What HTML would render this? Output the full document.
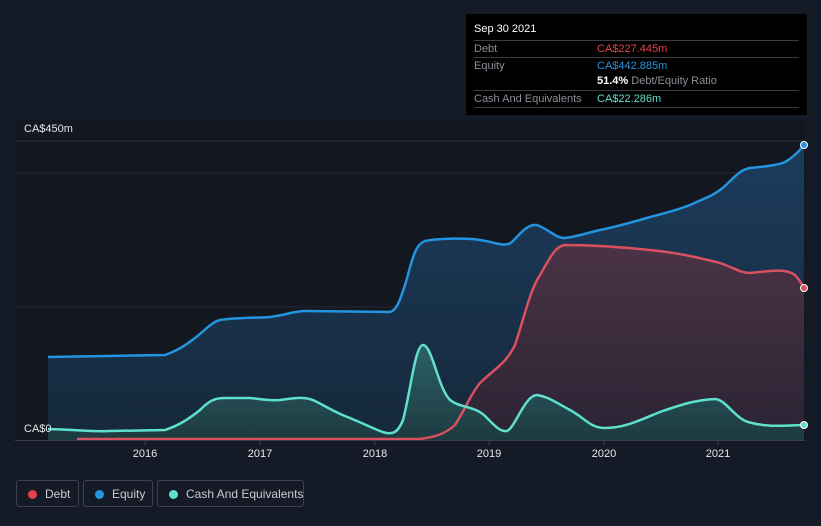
<!DOCTYPE html><html><head><style>
html,body{margin:0;background:#151b26;width:821px;height:526px;overflow:hidden;font-family:"Liberation Sans",sans-serif;position:relative}
.tt{position:absolute;left:466px;top:14px;width:341px;height:101px;background:#000;font-size:11px;color:#8a8f98}
.tt .r{position:absolute;left:8px;right:8px;border-top:1px solid #3a3d44;height:17px;line-height:17px}
.leg{position:absolute;top:480px;height:27px;border:1px solid #3c414b;border-radius:3px;color:#c8ccd2;font-size:12px;line-height:26px;box-sizing:border-box;white-space:nowrap}
.leg i{position:absolute;left:11px;top:9px;width:9px;height:9px;border-radius:50%}
</style></head><body>
<svg width="821" height="526" style="position:absolute;left:0;top:0">
<defs>
<linearGradient id="ge" x1="0" y1="0" x2="0" y2="1"><stop offset="0" stop-color="#1b3c5c"/><stop offset="1" stop-color="#16283b"/></linearGradient>
<linearGradient id="gd" x1="0" y1="0" x2="0" y2="1"><stop offset="0" stop-color="#4a3346"/><stop offset="1" stop-color="#2a2333"/></linearGradient>
<linearGradient id="gc" x1="0" y1="0" x2="0" y2="1"><stop offset="0" stop-color="#2c6166"/><stop offset="1" stop-color="#1d3a40"/></linearGradient>
</defs>
<rect x="15" y="120" width="790" height="320" fill="#121720"/>
<line x1="15" y1="141" x2="805" y2="141" stroke="#2e333c"/>
<line x1="15" y1="173" x2="805" y2="173" stroke="#252a33"/>
<line x1="15" y1="307" x2="805" y2="307" stroke="#252a33"/>
<path d="M48,357 L165,355 C180,350 190,342 195,338 C205,330 212,322 220,320 C240,317 260,318 270,317 C285,315 295,311 305,311 L390,312 C397,310 400,300 405,285 C412,262 414,245 425,241 C440,238 470,238 480,240 C495,242 505,248 512,242 C520,234 527,224 537,225 C550,230 555,238 565,238 C580,236 590,232 600,230 C620,226 640,220 650,217 C670,212 680,209 690,205 C705,198 712,196 720,190 C733,180 738,170 750,168 C770,166 778,165 785,162 C795,156 800,150 804,145 L804,440 L48,440Z" fill="url(#ge)"/>
<path d="M48,357 L165,355 C180,350 190,342 195,338 C205,330 212,322 220,320 C240,317 260,318 270,317 C285,315 295,311 305,311 L390,312 C397,310 400,300 405,285 C412,262 414,245 425,241 C440,238 470,238 480,240 C495,242 505,248 512,242 C520,234 527,224 537,225 C550,230 555,238 565,238 C580,236 590,232 600,230 C620,226 640,220 650,217 C670,212 680,209 690,205 C705,198 712,196 720,190 C733,180 738,170 750,168 C770,166 778,165 785,162 C795,156 800,150 804,145" fill="none" stroke="#2394df" stroke-width="2.5"/>
<path d="M77,439 L420,439 C435,437 445,434 455,425 C465,410 470,395 480,383 C495,368 505,365 515,345 C525,315 530,290 540,275 C550,258 555,246 565,245 C590,245 620,247 650,250 C680,253 700,258 720,263 C735,268 740,273 750,273 C770,271 785,268 795,275 C800,280 802,285 804,288 L804,440 L77,440Z" fill="url(#gd)"/>
<path d="M48,429 C80,430 95,432 110,431 L165,430 C180,425 190,418 200,410 C210,400 215,398 225,398 L250,398 C262,399 268,401 280,400 C295,398 305,396 315,401 C325,406 335,412 345,416 C360,422 370,427 380,431 C392,436 398,433 403,420 C410,395 415,345 423,345 C432,345 438,388 450,400 C460,408 475,406 485,416 C495,426 500,432 507,431 C515,428 525,395 537,395 C550,397 560,405 570,410 C585,418 590,428 605,428 C625,428 640,420 660,412 C680,405 695,400 715,399 C725,399 735,418 748,422 C765,427 780,426 804,425 L804,440 L48,440Z" fill="url(#gc)"/>
<path d="M77,439 L420,439 C435,437 445,434 455,425 C465,410 470,395 480,383 C495,368 505,365 515,345 C525,315 530,290 540,275 C550,258 555,246 565,245 C590,245 620,247 650,250 C680,253 700,258 720,263 C735,268 740,273 750,273 C770,271 785,268 795,275 C800,280 802,285 804,288" fill="none" stroke="#d9505f" stroke-width="2.5"/>
<path d="M48,429 C80,430 95,432 110,431 L165,430 C180,425 190,418 200,410 C210,400 215,398 225,398 L250,398 C262,399 268,401 280,400 C295,398 305,396 315,401 C325,406 335,412 345,416 C360,422 370,427 380,431 C392,436 398,433 403,420 C410,395 415,345 423,345 C432,345 438,388 450,400 C460,408 475,406 485,416 C495,426 500,432 507,431 C515,428 525,395 537,395 C550,397 560,405 570,410 C585,418 590,428 605,428 C625,428 640,420 660,412 C680,405 695,400 715,399 C725,399 735,418 748,422 C765,427 780,426 804,425" fill="none" stroke="#5fe0cc" stroke-width="2.5"/>
<circle cx="804" cy="145" r="3.5" fill="#2394df" stroke="#fff" stroke-width="1"/>
<circle cx="804" cy="288" r="3.5" fill="#d9505f" stroke="#fff" stroke-width="1"/>
<circle cx="804" cy="425" r="3.5" fill="#5fe0cc" stroke="#fff" stroke-width="1"/>
<line x1="15" y1="440.5" x2="805" y2="440.5" stroke="#3a3f48"/>
<g stroke="#3a3f48"><line x1="145" y1="441" x2="145" y2="445"/><line x1="260" y1="441" x2="260" y2="445"/><line x1="375" y1="441" x2="375" y2="445"/><line x1="489" y1="441" x2="489" y2="445"/><line x1="604" y1="441" x2="604" y2="445"/><line x1="718" y1="441" x2="718" y2="445"/></g>
<g fill="#e6e8eb" font-size="11" font-family="Liberation Sans,sans-serif" text-anchor="middle"><text x="145" y="457">2016</text><text x="260" y="457">2017</text><text x="375" y="457">2018</text><text x="489" y="457">2019</text><text x="604" y="457">2020</text><text x="718" y="457">2021</text></g>
<text x="24" y="132" fill="#e6e8eb" font-size="11">CA$450m</text>
<text x="24" y="432" fill="#e6e8eb" font-size="11">CA$0</text>
</svg>
<div class="tt">
<div style="position:absolute;left:8px;top:9px;color:#fff;font-size:11px">Sep 30 2021</div>
<div class="r" style="top:26px">Debt<span style="position:absolute;left:123px;color:#e8414a">CA$227.445m</span></div>
<div class="r" style="top:43px">Equity<span style="position:absolute;left:123px;color:#2394df">CA$442.885m</span></div>
<div class="r" style="top:59px;border:none"><span style="position:absolute;left:123px"><b style="color:#fff;font-weight:bold">51.4%</b> Debt/Equity Ratio</span></div>
<div class="r" style="top:76px">Cash And Equivalents<span style="position:absolute;left:123px;color:#5fe0cc">CA$22.286m</span></div>
<div class="r" style="top:93px;height:0"></div>
</div>
<div class="leg" style="left:16px;width:63px"><i style="background:#e8414a"></i><span style="position:absolute;left:28px">Debt</span></div>
<div class="leg" style="left:83px;width:70px"><i style="background:#2394df"></i><span style="position:absolute;left:28px">Equity</span></div>
<div class="leg" style="left:157px;width:147px"><i style="background:#5fe0cc"></i><span style="position:absolute;left:28px">Cash And Equivalents</span></div>
</body></html>
